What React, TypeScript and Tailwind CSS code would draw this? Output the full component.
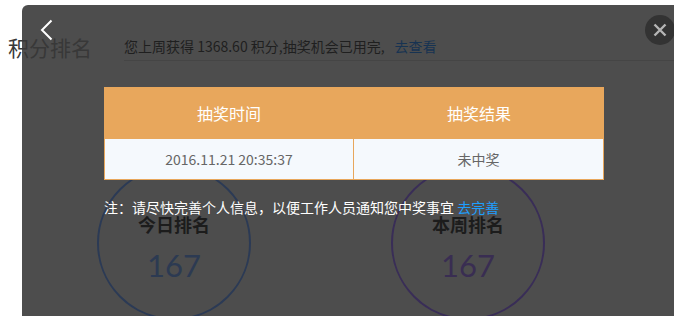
import React from "react";

export default function App() {
  const cjk = { fontFamily: '"Noto Sans CJK SC", "Noto Sans", sans-serif' };
  return (
    <div className="relative w-[674px] h-[316px] bg-white overflow-hidden" style={cjk}>
      {/* dimmed page panel */}
      <div className="absolute left-[22px] top-[5px] right-0 bottom-0 bg-[#4d4d4d] rounded-tl-[6px] overflow-visible">
        {/* underlying page (dimmed) */}
        <div className="flex flex-col">
          <div className="pl-[102px] pt-[31px]">
            <div className="flex items-center h-[20px] text-[14px] leading-[20px] text-[#1f1f1f] whitespace-nowrap">
              <span>您上周获得 1368.60 积分,抽奖机会已用完,</span>
              <span className="ml-[10px] text-[#173352]">去查看</span>
            </div>
            <div className="mt-[4px] h-px bg-[#454545]" />
          </div>
          <div className="flex pl-[75px] gap-[140px] mt-[105px]">
            <div className="w-[154px] h-[154px] shrink-0 rounded-full border-2 border-[#2b3a55] flex flex-col items-center">
              <div className="mt-[43px] text-[18px] leading-[26px] font-bold text-[#1c1c1c]">今日排名</div>
              <div className="mt-[9px] text-[31px] leading-[38px] text-[#2c3a52]" style={{ fontFamily: "Lato, sans-serif" }}>167</div>
            </div>
            <div className="w-[154px] h-[154px] shrink-0 rounded-full border-2 border-[#392d57] flex flex-col items-center">
              <div className="mt-[43px] text-[18px] leading-[26px] font-bold text-[#1c1c1c]">本周排名</div>
              <div className="mt-[9px] text-[31px] leading-[38px] text-[#392d52]" style={{ fontFamily: "Lato, sans-serif" }}>167</div>
            </div>
          </div>
        </div>

        {/* back arrow */}
        <svg className="absolute left-[18px] top-[14px]" width="14" height="22" viewBox="0 0 14 22">
          <path d="M11.5 1.5 L2 11 L11.5 20.5" fill="none" stroke="#ffffff" strokeWidth="2" />
        </svg>

        {/* close button */}
        <div className="absolute left-[623px] top-[10px] w-[30px] h-[30px] rounded-full bg-[#333333] flex items-center justify-center">
          <svg width="14" height="14" viewBox="0 0 14 14">
            <path d="M1.5 1.5 L12.5 12.5 M12.5 1.5 L1.5 12.5" stroke="#b5b5b5" strokeWidth="2.4" />
          </svg>
        </div>

        {/* modal content */}
        <div className="absolute inset-0 pl-[82px] pt-[82px]">
          <div className="w-[500px]">
            <div className="flex h-[52px] bg-[#e8a75c] text-white text-[16px]">
              <div className="flex-1 flex items-center justify-center">抽奖时间</div>
              <div className="flex-1 flex items-center justify-center">抽奖结果</div>
            </div>
            <div className="flex h-[41px] bg-[#f5f9fd] border border-t-0 border-[#e8a75c] text-[14px] text-[#666666]">
              <div className="w-[249px] border-r border-[#e8a75c] flex items-center justify-center">2016.11.21 20:35:37</div>
              <div className="flex-1 flex items-center justify-center">未中奖</div>
            </div>
          </div>
          <div className="mt-[17px] text-[14px] leading-[20px] text-white whitespace-nowrap">
            注：请尽快完善个人信息，以便工作人员通知您中奖事宜 <span className="text-[#1e9fff]">去完善</span>
          </div>
        </div>
      </div>

      {/* page title */}
      <div className="absolute left-[8px] top-[33px] text-[21px] leading-[28px] text-[#383838]">积分排名</div>
    </div>
  );
}
